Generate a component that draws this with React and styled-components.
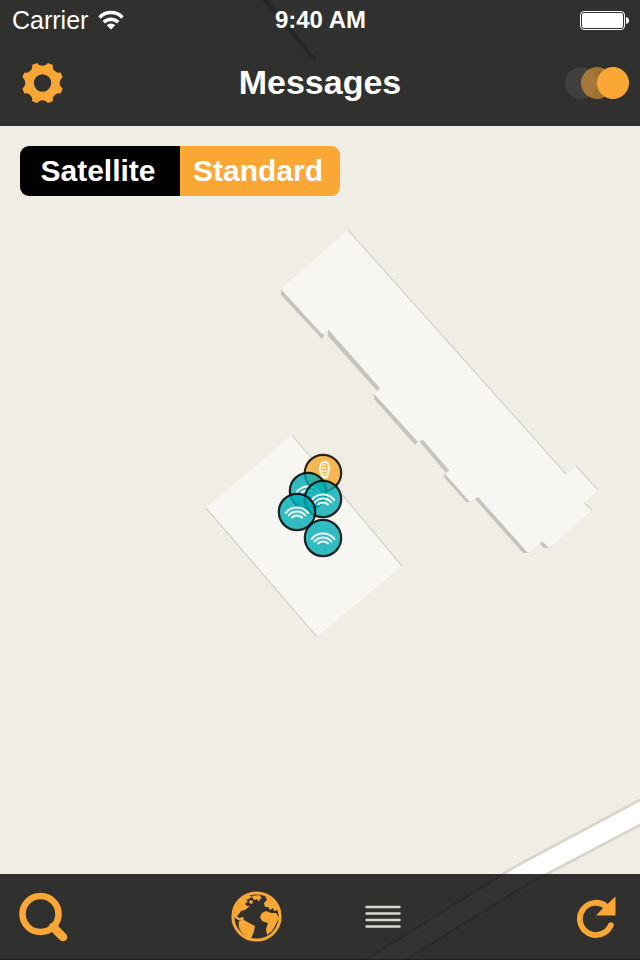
import React, { useState } from "react";
import styled, { createGlobalStyle } from "styled-components";

const ORANGE = "#fba735";

const GlobalStyle = createGlobalStyle`
  * { box-sizing: border-box; }
  body {
    margin: 0;
    background: #f0ede4;
    font-family: "Liberation Sans", Arial, sans-serif;
  }
`;

const Screen = styled.div`
  display: grid;
  grid-template-rows: auto 1fr auto;
  grid-template-columns: minmax(0, 1fr);
  min-height: 100vh;
`;

const Map = styled.div`
  grid-area: 1 / 1 / 4 / 2;
  position: relative;
  overflow: hidden;
  background: #f0ede4;
`;

const MapPlane = styled.div`
  position: absolute;
  left: calc(50% - 320px);
  top: calc(50% - 480px);
`;

const MapDrawing = styled.svg`
  display: block;
  overflow: visible;
`;

const Pin = styled.button`
  position: absolute;
  left: ${(p) => p.$x}px;
  top: ${(p) => p.$y}px;
  width: 40px;
  height: 40px;
  margin: -20px 0 0 -20px;
  padding: 0;
  border: 0;
  background: none;
  cursor: pointer;

  svg { display: block; }
`;

const Header = styled.header`
  grid-area: 1 / 1 / 2 / 2;
  position: relative;
  background: rgba(0, 0, 0, 0.8);
  color: #fff;
`;

const TriColumns = styled.div`
  display: grid;
  grid-template-columns: 1fr auto 1fr;
  align-items: center;
`;

const StatusBar = styled(TriColumns)`
  height: 40px;
  padding: 0 11px 0 12px;
  font-size: 24px;
  line-height: 40px;
`;

const NavBar = styled(TriColumns)`
  height: 86px;
  padding: 0 11px;
`;

const Cluster = styled.div`
  display: flex;
  align-items: center;
  gap: ${(p) => p.$gap || 0}px;
  justify-content: ${(p) => (p.$end ? "flex-end" : "flex-start")};
`;

const Carrier = styled.span`
  font-size: 25px;
`;

const Clock = styled.time`
  font-weight: 700;
`;

const Title = styled.h1`
  margin: 0;
  padding-bottom: 2px;
  font-size: 34px;
  line-height: 40px;
  font-weight: 700;
`;

const IconButton = styled.button`
  display: block;
  padding: 0 ${(p) => p.$inset || 0}px;
  border: 0;
  background: none;
  cursor: pointer;

  svg { display: block; }
`;

const HiddenInput = styled.input`
  position: absolute;
  width: 1px;
  height: 1px;
  margin: 0;
  opacity: 0;
`;

const Toggle = styled.label`
  display: block;
  cursor: pointer;

  svg {
    display: block;
    transform: ${(p) => (p.$on ? "none" : "scaleX(-1)")};
  }
`;

const Content = styled.main`
  grid-area: 2 / 1 / 3 / 2;
  position: relative;
  padding: 20px;
  pointer-events: none;
`;

const Segmented = styled.fieldset`
  display: grid;
  grid-template-columns: 1fr 1fr;
  width: 100%;
  max-width: 320px;
  margin: 0;
  padding: 0;
  border: 0;
  border-radius: 9px;
  overflow: hidden;
  pointer-events: auto;
`;

const Segment = styled.label`
  padding-right: 4px;
  background: ${(p) => (p.$active ? ORANGE : "#000")};
  color: #fff;
  font-size: 30px;
  font-weight: 700;
  line-height: 50px;
  text-align: center;
  cursor: pointer;
`;

const Toolbar = styled.footer`
  grid-area: 3 / 1 / 4 / 2;
  position: relative;
  display: grid;
  grid-template-columns: 1fr auto 1fr;
  align-items: center;
  height: 86px;
  padding: 0 24px 0 18px;
  background: rgba(0, 0, 0, 0.8);
  box-shadow: inset 0 -1px rgba(24, 0, 8, 0.4);
`;

const Views = styled(Cluster)`
  padding-right: 2px;
`;

const GEAR_PATH = (() => {
  const pt = (deg) => {
    const a = (deg * Math.PI) / 180;
    return `${(21 + 20.8 * Math.cos(a)).toFixed(2)} ${(21 + 20.8 * Math.sin(a)).toFixed(2)}`;
  };
  let d = `M${pt(-15)}`;
  for (let k = 0; k < 8; k += 1) {
    d += `A6.4 6.4 0 0 0 ${pt(k * 45 + 15)}A20.8 20.8 0 0 1 ${pt(k * 45 + 30)}`;
  }
  return `${d}Z M29.7 21a8.7 8.7 0 1 0-17.4 0a8.7 8.7 0 1 0 17.4 0Z`;
})();

const GearIcon = () => (
  <svg width="44" height="42" viewBox="-1.5 0 44 42">
    <path d={GEAR_PATH} fill={ORANGE} fillRule="evenodd" />
  </svg>
);

const WifiIcon = () => (
  <svg width="26" height="20" viewBox="0 0 26 20" role="img" aria-label="Wi-Fi">
    <path d="M1.5 7.4a16.2 16.2 0 0 1 23 0" fill="none" stroke="#fff" strokeWidth="3.500" />
    <path d="M5.800 12.200a10 10 0 0 1 14.400 0" fill="none" stroke="#fff" strokeWidth="3.500" />
    <path d="M8.800 15.300a5.800 5.800 0 0 1 8.400 0L13 19.600Z" fill="#fff" />
  </svg>
);

const BatteryIcon = () => (
  <svg width="49" height="20" viewBox="0 0 49 20" role="img" aria-label="Battery full">
    <rect x="0.5" y="1.5" width="44" height="18" rx="3.5" fill="none" stroke="#fff" />
    <rect x="2" y="3" width="41" height="15" rx="2" fill="#fff" />
    <path d="M46 7q3 .6 3 3.500t-3 3.500Z" fill="#fff" />
  </svg>
);

const ToggleDrawing = () => (
  <svg width="64" height="32" viewBox="0 0 64 32">
    <circle cx="16" cy="16" r="16" fill="#fff" fillOpacity="0.08" />
    <circle cx="32" cy="16" r="16" fill={ORANGE} fillOpacity="0.54" />
    <circle cx="48" cy="16" r="16" fill={ORANGE} />
  </svg>
);

const SearchIcon = () => (
  <svg width="50" height="50" viewBox="0 0 50 50" fill="none" stroke={ORANGE}>
    <circle cx="22.5" cy="22" r="18" strokeWidth="6.6" />
    <path d="M35 35L45 45" strokeWidth="8.600" strokeLinecap="round" />
  </svg>
);

const GlobeIcon = () => (
  <svg width="52" height="52" viewBox="0 0 52 52" fill={ORANGE}>
    <circle cx="25.500" cy="25.500" r="23.600" fill="none" stroke={ORANGE} strokeWidth="3" />
    <path d="M3 24C4 14 10 7 18 4L21 6L15 9L17 10L14 13L16 15L19 15L14 19L10 20L8 23L6 25L8 27L12 26L13 28L11 30L7 29L3 26Z" />
    <path d="M21 5L28 4L31 7L29 8L28 11L26 8L24 9L22 8Z M19 9L22 10L21 13L18 12Z" />
    <path d="M8 30L13 29L18 32L24 35L23 40L20 48C12 45 6 38 8 30Z" />
    <path d="M33 12L36 9L34 5C42 8 48 16 49 24L46 19L43 20L42 17L39 19L37 16L34 16Z" />
    <path d="M31 22L35 20L40 22L45 22L48 27L44 35L41 40L36 44L35 38L37 32L31 30L29 26Z" />
  </svg>
);

const ListIcon = () => (
  <svg width="36" height="24" viewBox="0 0 36 24">
    <path
      d="M1.500 2h33M1.500 8.500h33M1.500 15h33M1.500 21.500h33"
      stroke="#d6d6d3"
      strokeWidth="2.500"
      strokeLinecap="round"
    />
  </svg>
);

const RefreshIcon = () => (
  <svg width="39" height="44" viewBox="0 0 39 44">
    <path
      d="M33.800 30.200A16.100 16.100 0 1 1 29 11.300"
      fill="none"
      stroke={ORANGE}
      strokeWidth="5.800"
      strokeLinecap="round"
    />
    <path d="M38.500 1.500V20.500H19L27 12L31 8.500Z" fill={ORANGE} />
  </svg>
);

const SignalPin = () => (
  <svg width="40" height="40" viewBox="-20 -20 40 40">
    <circle r="18.200" fill="#00aeb4" fillOpacity="0.8" stroke="#000" strokeOpacity="0.84" strokeWidth="2.200" />
    <g fill="none" stroke="#fff" strokeOpacity="0.95" strokeWidth="2" strokeLinecap="round">
      <path d="M-11.300 1A14.500 14.500 0 0 1 11.300 1" />
      <path d="M-8.300 3.500A10.500 10.500 0 0 1 8.300 3.500" />
      <path d="M-5 5.500A7 7 0 0 1 5 5.500" />
    </g>
  </svg>
);

const FootprintPin = () => (
  <svg width="40" height="40" viewBox="-20 -20 40 40">
    <circle r="18.200" fill="#f4ad39" fillOpacity="0.85" stroke="#000" strokeOpacity="0.84" strokeWidth="2.200" />
    <g fill="none" stroke="#fff">
      <path d="M2-11C5-11 6-8 6-4C6-1 4 0 4 4H-1C-1 0-3-1-3-4C-3-8-1-11 2-11Z" strokeWidth="2.400" strokeDasharray="1.800 0.500" />
      <path d="M0-8H3M-1-5H4M-1-2H4M0 1H3" strokeWidth="1.500" strokeDasharray="1.800 0.600" />
    </g>
  </svg>
);

const PINS = [
  { id: "visit", x: 323, y: 473, label: "Visited place", Drawing: FootprintPin },
  { id: "m1", x: 308, y: 491, label: "Message 1", Drawing: SignalPin },
  { id: "m2", x: 323, y: 499, label: "Message 2", Drawing: SignalPin },
  { id: "m3", x: 297, y: 512, label: "Message 3", Drawing: SignalPin },
  { id: "m4", x: 323, y: 538, label: "Message 4", Drawing: SignalPin },
];

const Terrain = () => (
  <MapDrawing width="640" height="960" viewBox="0 0 640 960" aria-hidden="true">
    <g fill="#f8f6f3">
      <path d="M224-50L316 58L450-50Z" />
      <path d="M292 435L402 566L317 637L206 508Z" />
    </g>
    <g fill="#c5c4bf">
      <path d="M220-50H228L316 58V64Z" />
      <path d="M281 289L324 335L322 339L281 295Z" />
      <path d="M328 329L380 388L378 392L328 336Z" />
      <path d="M374 394L418 441L415 445L374 399Z" />
      <path d="M423 439L450 470L446 473L420 442Z" />
      <path d="M446 474L471 502L466 502L443 476Z" />
      <path d="M478 496L530 553L523 553L475 499Z" />
      <path d="M543 540L551 548L544 548L540 544Z" />
    </g>
    <path
      fill="#f8f6f3"
      d="M348 230L566 474L576 466L598 490L584 503L592 510L549 548L542 541L528 553L478 497L470 502L446 475L449 470L423 440L417 441L375 394L380 388L329 330L322 334L281 289Z"
    />
    <g fill="none" stroke="#c0bfb8">
      <path d="M348 230L566 474M576 466L598 490M584 503L592 510" />
      <path d="M292 435L402 566M206 508L317 637" />
    </g>
    <path
      d="M1280 457L640 800L520 864L503 874L365 960L-115 1259V1279L405 960L528 884L547 874L640 825L1280 482Z"
      fill="#fff"
      stroke="#d9d4ca"
      strokeWidth="2.600"
    />
  </MapDrawing>
);

export default function App() {
  const [layer, setLayer] = useState("Standard");
  const [live, setLive] = useState(true);

  return (
    <>
      <GlobalStyle />
      <Screen>
        <Map>
          <MapPlane>
            <Terrain />
            {PINS.map(({ id, x, y, label, Drawing }) => (
              <Pin key={id} type="button" $x={x} $y={y} aria-label={label}>
                <Drawing />
              </Pin>
            ))}
          </MapPlane>
        </Map>

        <Header>
          <StatusBar>
            <Cluster $gap={10}>
              <Carrier>Carrier</Carrier>
              <WifiIcon />
            </Cluster>
            <Clock>9:40 AM</Clock>
            <Cluster $end>
              <BatteryIcon />
            </Cluster>
          </StatusBar>
          <NavBar>
            <Cluster>
              <IconButton type="button" aria-label="Settings" $inset={9}>
                <GearIcon />
              </IconButton>
            </Cluster>
            <Title>Messages</Title>
            <Cluster $end>
              <Toggle $on={live}>
                <HiddenInput
                  type="checkbox"
                  aria-label="Live updates"
                  checked={live}
                  onChange={(e) => setLive(e.target.checked)}
                />
                <ToggleDrawing />
              </Toggle>
            </Cluster>
          </NavBar>
        </Header>

        <Content>
          <Segmented aria-label="Map type">
            {["Satellite", "Standard"].map((name) => (
              <Segment key={name} $active={layer === name}>
                <HiddenInput
                  type="radio"
                  name="layer"
                  checked={layer === name}
                  onChange={() => setLayer(name)}
                />
                {name}
              </Segment>
            ))}
          </Segmented>
        </Content>

        <Toolbar>
          <Cluster>
            <IconButton type="button" aria-label="Search">
              <SearchIcon />
            </IconButton>
          </Cluster>
          <Views $gap={82}>
            <IconButton type="button" aria-label="Map view">
              <GlobeIcon />
            </IconButton>
            <IconButton type="button" aria-label="List view">
              <ListIcon />
            </IconButton>
          </Views>
          <Cluster $end>
            <IconButton type="button" aria-label="Refresh">
              <RefreshIcon />
            </IconButton>
          </Cluster>
        </Toolbar>
      </Screen>
    </>
  );
}
